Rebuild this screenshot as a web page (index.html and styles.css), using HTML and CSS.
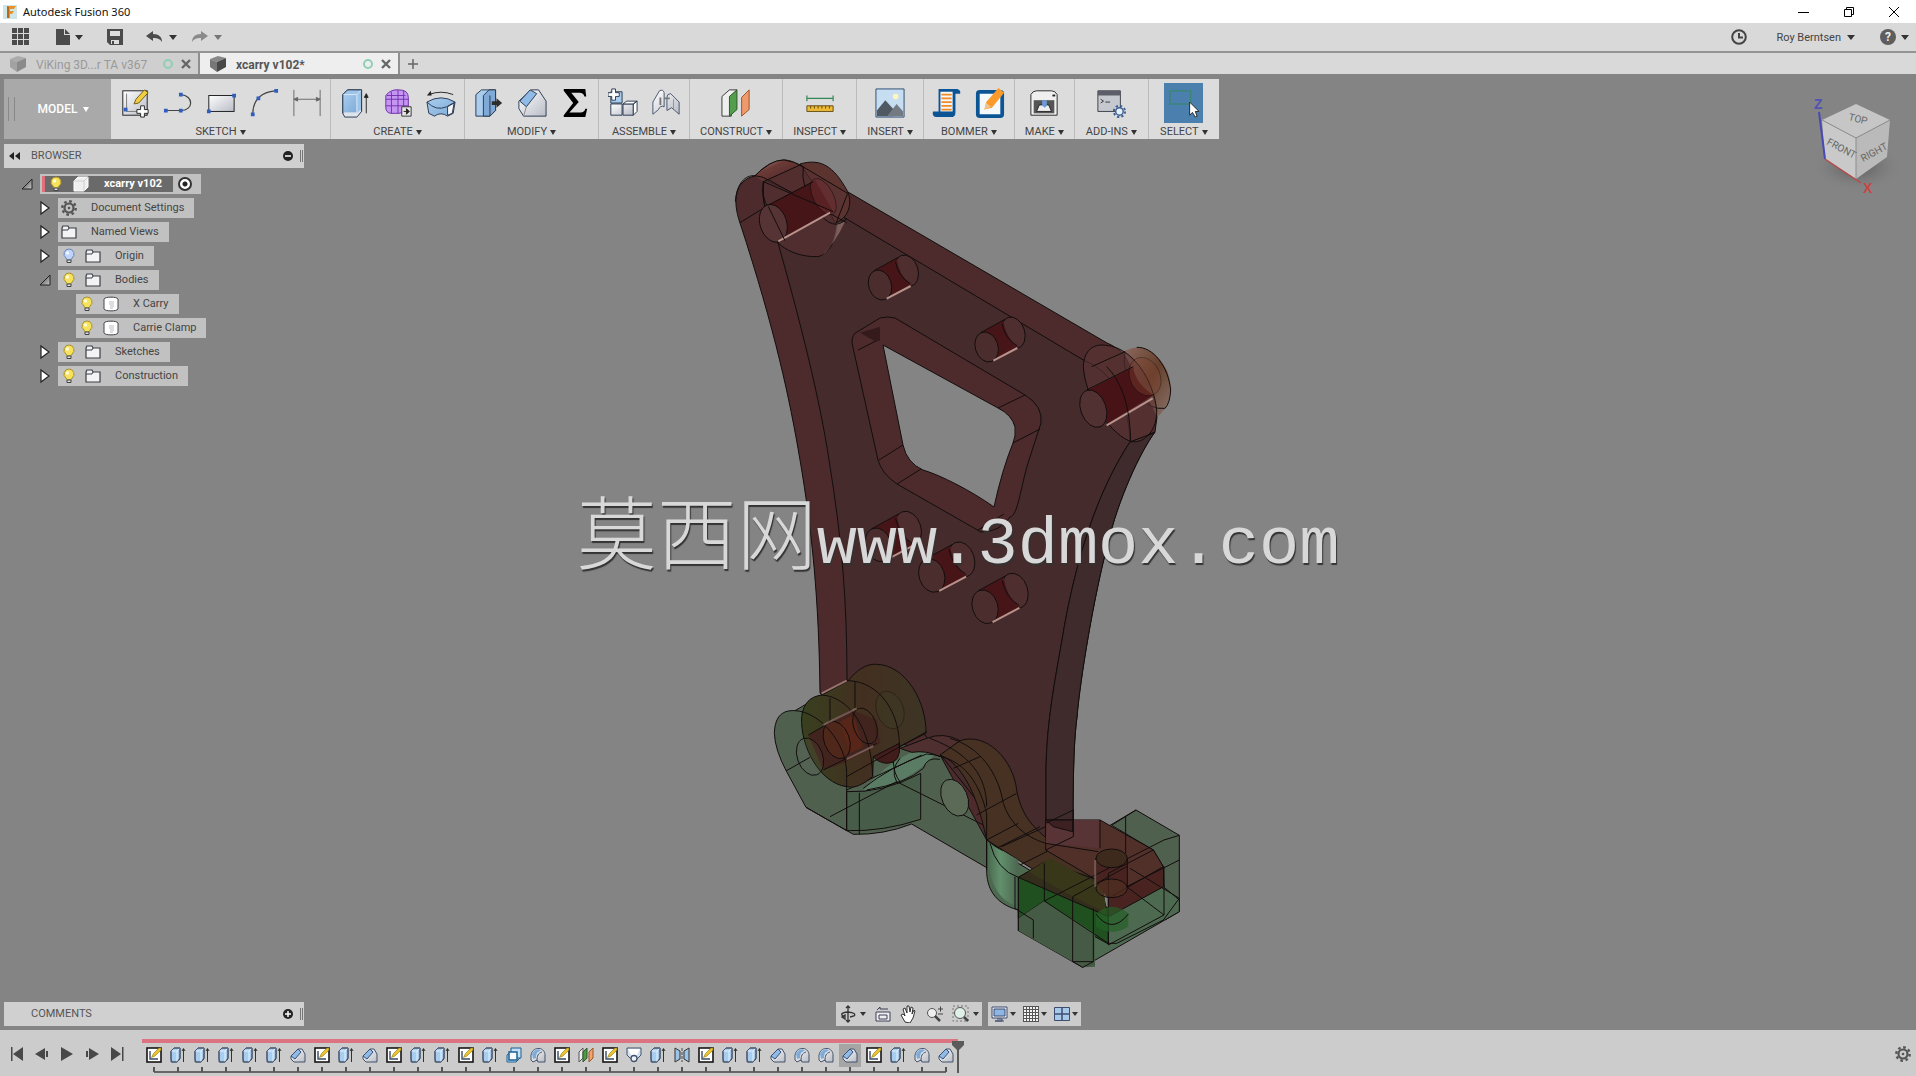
FILE: index.html
```html
<!DOCTYPE html>
<html lang="en">
<head>
<meta charset="utf-8">
<meta name="viewport" content="width=device-width, initial-scale=1">
<title>Autodesk Fusion 360</title>
<link rel="stylesheet" href="styles.css">
</head>
<body>
<svg class="sprite" aria-hidden="true">
  <defs>
    <linearGradient id="g-blue" x1="0" y1="0" x2="1" y2="1"><stop offset="0" stop-color="#a9cdee"/><stop offset="1" stop-color="#7fabd8"/></linearGradient>
    <linearGradient id="g-white" x1="0" y1="0" x2="1" y2="1"><stop offset="0" stop-color="#ffffff"/><stop offset="1" stop-color="#b9bcc6"/></linearGradient>
    <linearGradient id="g-tri" x1="0" y1="0" x2="1" y2="1"><stop offset="0.3" stop-color="#666"/><stop offset="1" stop-color="#ccc"/></linearGradient>
  </defs>
  <symbol id="t-sketch" viewBox="0 0 16 16"><rect x="1" y="1" width="14" height="14" fill="#fff" stroke="#151515" stroke-width="1.6"/><path d="M4 4v8h8" fill="none" stroke="#3c4a66" stroke-width="1.4"/><path d="M5.500 10.500l2-4L13 1h2v2L9 9z" fill="#ecc52c" stroke="#8b7415" stroke-width=".6"/></symbol>
  <symbol id="t-extrude" viewBox="0 0 16 16"><path d="M1 4l3-3h6v10l-3 4H1z" fill="#a9cdee" stroke="#43536b"/><path d="M1 4h6l3-3M7 4v11" fill="none" stroke="#e8f2fb"/><path d="M1 12l1 3h5l3-3V1H4L1 4z" fill="none" stroke="#43536b"/><path d="M13.500 15V2M12 4l1.500-2.500L15 4" fill="none" stroke="#333"/></symbol>
  <symbol id="t-chamfer" viewBox="0 0 16 16"><path d="M1 9l7-7h4l3 5v8H4l-3-3z" fill="url(#g-white)" stroke="#43536b"/><path d="M1 9l7-7 3 3-6 7z" fill="#8fbbe6" stroke="#36507a"/></symbol>
  <symbol id="t-fillet" viewBox="0 0 16 16"><path d="M1 8C2 3 6 1 9 1.500c4 0 6 4 6 6V15H8l-1-2-4 2-2-2z" fill="url(#g-white)" stroke="#43536b"/><path d="M2 7C4 2 9 1 11 4c-3 0-5 2-5 7l-3 1z" fill="#7fabd8"/><path d="M7 14c0-5 1-8 5-9" fill="none" stroke="#43536b"/></symbol>
  <symbol id="t-combine" viewBox="0 0 16 16"><path d="M5 5V1h10v10h-4M5 5l-4 3v7h9l4-4" fill="#bfe0f5" stroke="#1f5f8f"/><rect x="3" y="5" width="8" height="8" fill="#f4faff" stroke="#1f5f8f" stroke-width="1.500"/></symbol>
  <symbol id="t-plane" viewBox="0 0 16 16"><path d="M1 5l4-4v10l-4 4z" fill="#eee" stroke="#555"/><path d="M5 5l4-4v10l-4 4z" fill="#4c9a48" stroke="#2e5a2b"/><path d="M11 5l4-4v10l-4 4z" fill="#f3a46c" stroke="#9a5426"/></symbol>
  <symbol id="t-loft" viewBox="0 0 16 16"><path d="M1 1h14v7l-4 4H5L1 8z" fill="#cfe1f3" stroke="#43536b"/><path d="M2 2h12l-3 6H5z" fill="#fff"/><circle cx="8" cy="11.500" r="3" fill="#e8f2fb" stroke="#43536b" stroke-width="1.300"/></symbol>
  <symbol id="t-mirror" viewBox="0 0 16 16"><path d="M1 1l5 3v8l-5 3zM15 1l-5 3v8l5 3z" fill="#9cc3e8" stroke="#333"/><path d="M8 1v14" stroke="#444" stroke-dasharray="3 1"/></symbol>
  <symbol id="bulb" viewBox="0 0 16 16"><path d="M8 1a5 5 0 0 0-3 9l1 2h4l1-2a5 5 0 0 0-3-9z" fill="#f6e25c" stroke="#a8912c"/><circle cx="6.500" cy="5" r="1.700" fill="#fffbd6"/><path d="M6 12h4v2.500H6z" fill="#ddd" stroke="#444"/></symbol>
  <symbol id="bulb-off" viewBox="0 0 16 16"><path d="M8 1a5 5 0 0 0-3 9l1 2h4l1-2a5 5 0 0 0-3-9z" fill="#bed4fa" stroke="#6f86b4"/><circle cx="6.500" cy="5" r="1.700" fill="#eff5ff"/><path d="M6 12h4v2.500H6z" fill="#ddd" stroke="#444"/></symbol>
  <symbol id="folder" viewBox="0 0 16 16"><path d="M1 14V4l1-2h5l1 2h7v10z" fill="#f3f3f5" stroke="#3d3f45" stroke-width="1.200"/><path d="M1 6h6l1-2" fill="none" stroke="#3d3f45"/></symbol>
  <symbol id="body" viewBox="0 0 16 16"><path d="M1 3c1-2.500 13-2.500 14 0v10c-1 2.500-13 2.500-14 0z" fill="#fff" stroke="#44464c"/><path d="M6 6h5M6 8h5M7 10h4M7 12h3" stroke="#bbb"/></symbol>
  <symbol id="cube" viewBox="0 0 16 16"><path d="M1 5l4-4h10v10l-4 4H1z" fill="#efefef" stroke="#fff"/><path d="M1 5h10l4-4M11 5v10" fill="none" stroke="#cfcfcf"/></symbol>
  <symbol id="gear" viewBox="0 0 16 16"><circle cx="8" cy="8" r="4.500" fill="none" stroke="#555" stroke-width="2.200"/><circle cx="8" cy="8" r="6.700" fill="none" stroke="#555" stroke-width="2.400" stroke-dasharray="2.600 2.660"/><circle cx="8" cy="8" r="1.300" fill="#555"/></symbol>
  <symbol id="closed" viewBox="0 0 12 16"><path d="M2 2v12l8-6z" fill="#fff" stroke="#222" stroke-width="1.200"/></symbol>
  <symbol id="open" viewBox="0 0 12 12"><path d="M1 11h10V1z" fill="url(#g-tri)" stroke="#222"/></symbol>
  <symbol id="doc-cube" viewBox="0 0 16 16"><path d="M0 3l8-3 8 2-9 4z" fill="#888"/><path d="M0 3l7 3v10l-7-5z" fill="#777"/><path d="M7 6l9-4v9l-9 5z" fill="#484848"/></symbol>
  <symbol id="cross" viewBox="0 0 10 10"><path d="M1 1l8 8M9 1L1 9" stroke="#666" stroke-width="2.400"/></symbol>
</svg>

<div class="app">
  <header class="titlebar">
    <svg class="logo" viewBox="0 0 14 14"><rect width="14" height="14" fill="#cfe6e6"/><path d="M4 1h9l-2 3H7v2h4l-2 3H7v4H4z" fill="#e8922b"/><path d="M4 1l2 1v11H4z" fill="#b96a18"/></svg>
    <h1>Autodesk Fusion 360</h1>
    <div class="window-buttons">
      <button aria-label="Minimize"><svg viewBox="0 0 12 12"><path d="M0 6.500h11" stroke="#000"/></svg></button>
      <button aria-label="Restore"><svg viewBox="0 0 12 12"><path d="M1.500 3.500h7v7h-7zM3.500 3V1.500h7v7H9" fill="none" stroke="#000"/></svg></button>
      <button aria-label="Close"><svg viewBox="0 0 12 12"><path d="M1 1l10 10M11 1L1 11" stroke="#000"/></svg></button>
    </div>
  </header>

  <div class="quickbar">
    <button class="q-grid" aria-label="Data panel"><svg width="18" height="18" viewBox="0 0 18 18"><path d="M0 0h5v5H0zM6 0h5v5H6zM12 0h5v5h-5zM0 6h5v5H0zM6 6h5v5H6zM12 6h5v5h-5zM0 12h5v5H0zM6 12h5v5H6zM12 12h5v5h-5z" fill="#4b4b4b"/></svg></button>
    <button class="q-file" aria-label="File"><svg width="14" height="16" viewBox="0 0 14 16"><path d="M0 0h8v6h6v10H0z" fill="#4b4b4b"/><path d="M9 0l5 5H9z" fill="#4b4b4b"/></svg><i class="caret"></i></button>
    <button class="q-save" aria-label="Save"><svg width="16" height="16" viewBox="0 0 16 16"><path d="M0 0h16v16H3l-3-3z" fill="#4b4b4b"/><path d="M3 2h10v5H3zM4 11h8v4H4z" fill="#ddd"/><path d="M5 12h2v3H5z" fill="#4b4b4b"/></svg></button>
    <button class="q-undo" aria-label="Undo"><svg width="17" height="12" viewBox="0 0 17 12"><path d="M0 5l7-5v3c6 0 9 3 9 8-2-3-4-4-9-4v3z" fill="#4b4b4b"/></svg><i class="caret"></i></button>
    <button class="q-redo" aria-label="Redo"><svg width="17" height="12" viewBox="0 0 17 12"><path d="M17 5l-7-5v3C4 3 1 6 1 11c2-3 4-4 9-4v3z" fill="#8a8a8a"/></svg><i class="caret dim"></i></button>
    <span class="spacer"></span>
    <button class="q-job" aria-label="Job status"><svg width="16" height="16" viewBox="0 0 16 16"><circle cx="8" cy="8" r="6.800" fill="none" stroke="#444" stroke-width="2"/><path d="M8 4v4.500h4" fill="none" stroke="#444" stroke-width="2"/></svg></button>
    <button class="q-user">Roy Berntsen<i class="caret"></i></button>
    <button class="q-help" aria-label="Help"><span class="help">?</span><i class="caret"></i></button>
  </div>

  <nav class="tabs">
    <div class="tab"><svg class="dim-icon" width="16" height="16"><use href="#doc-cube"/></svg><a href="#viking">ViKing 3D...r TA v367</a><i class="status"></i><button aria-label="Close tab"><svg width="10" height="10"><use href="#cross"/></svg></button></div>
    <div class="tab active"><svg width="16" height="16"><use href="#doc-cube"/></svg><a href="#xcarry">xcarry v102*</a><i class="status"></i><button aria-label="Close tab"><svg width="10" height="10"><use href="#cross"/></svg></button></div>
    <button class="new-tab" aria-label="New tab"><svg width="12" height="12" viewBox="0 0 12 12"><path d="M6 1v10M1 6h10" stroke="#666" stroke-width="1.500"/></svg></button>
  </nav>

  <main class="viewport">
    <svg class="model" viewBox="0 74 1916 956" preserveAspectRatio="xMidYMid slice" role="img" aria-label="Carriage plate with clamp">
      <defs>
        <linearGradient id="lobe" x1="0" y1="0" x2="1" y2="1"><stop offset="0" stop-color="#caa79f"/><stop offset=".35" stop-color="#6b3a36"/><stop offset="1" stop-color="#4a2627"/></linearGradient>
        <linearGradient id="lobe2" x1="0" y1="0" x2="1" y2="1"><stop offset="0" stop-color="#8c6a60"/><stop offset=".5" stop-color="#653f2c"/><stop offset="1" stop-color="#8a7369"/></linearGradient>
        <linearGradient id="olive" x1="0" y1="0" x2="1" y2="0"><stop offset="0" stop-color="#38401f"/><stop offset=".5" stop-color="#432f20"/><stop offset="1" stop-color="#3d3525"/></linearGradient>
        <linearGradient id="bend" x1="0" y1="0" x2="1" y2="0"><stop offset="0" stop-color="#4a6b50"/><stop offset=".4" stop-color="#62906c"/><stop offset="1" stop-color="#4c6650"/></linearGradient>
      </defs>
      <g class="edge">
        <!-- plate side walls and front face -->
        <path fill="#4d2b2c" fill-rule="evenodd" d="M740 223C732 200 735 180 755 176C765 166 775 160 784 160C792 160 800 164 848 192L1107 343C1130 352 1155 390 1157 417L1155 432C1140 452 1118 500 1108 543C1094 595 1080 680 1077 717C1074 740 1073 770 1073 832L1046 850L1000 850L880 760L820 693C819 600 812 530 800 460C790 400 775 330 740 223zM883 345L998 408Q1012 415 1015 427Q1016 436 1013 443Q1002 470 994 507C970 490 940 475 923 470Q907 463 903 445z"/>
        <path fill="#452b2c" fill-rule="evenodd" d="M778 243C800 320 820 400 829 460C842 540 847 600 847 680L925 735L1000 830L1046 850L1046 767C1047 720 1055 680 1062 640C1075 560 1098 490 1130 442C1129 400 1110 370 1085 361L840 215L765 180C760 190 764 215 778 243zM852 343Q852 334 857 332L880 318Q888 316 895 318L1025 395Q1043 406 1041 423L1028 463C1020 490 1018 515 1010 517Q1000 532 981 532L897 484Q882 474 878 460L852 343z"/>
        <path fill="none" d="M858 350L878 340M998 408L1025 395M1013 443L1040 429M879 460L903 445M897 484L921 469M978 530L1004 514"/>
        <path fill="#3f2b2b" d="M1130 442L1155 432C1140 452 1118 500 1108 543C1094 595 1080 680 1077 717C1074 740 1073 770 1073 832L1046 850V767C1047 720 1055 680 1062 640C1075 560 1098 490 1130 442z"/>
      </g>

      <!-- bosses and screw holes of the upper half -->
      <g class="edge" transform="translate(720 150) scale(.33333)">
        <path fill="url(#lobe)" d="M105 77C140 50 160 30 192 30C220 32 235 42 240 45L130 95z" stroke="none"/>
        <path fill="#5b332f" d="M240 42C300 25 340 45 383 125C400 165 380 210 345 218L300 130z"/>
        <path fill="#5a3233" fill-opacity=".55" d="M130 95L240 45L383 130L350 215C355 270 320 320 290 320C250 320 210 310 175 280C140 210 125 150 130 95z"/>
        <path fill="#a1807a" stroke="none" d="M350 220L375 215Q345 280 305 318Q345 290 350 220z" opacity=".6"/>
        <path fill="none" d="M46 155C50 100 75 75 105 77Q125 78 150 92L380 218M60 218L135 172M135 165L175 280M105 77Q150 30 192 30Q220 33 250 50M250 50Q240 110 290 180T380 205M130 95Q125 150 145 170"/>
        <path fill="#451518" stroke="none" d="M145 165L285 90L340 185L205 258z"/>
        <ellipse cx="310" cy="140" rx="30" ry="60" transform="rotate(-28 310 140)" fill="#6b2c2f" opacity=".55"/>
        <ellipse cx="160" cy="220" rx="40" ry="58" transform="rotate(-18 160 220)" fill="#563334"/>
        <path class="glint" d="M175 274L330 188"/>
        <path fill="none" d="M145 165L280 95M130 95L340 185M145 170L195 272"/>

        <g id="hole">
          <ellipse cx="560" cy="362" rx="34" ry="48" transform="rotate(-18 560 362)" fill="#4f2e30"/>
          <path fill="#471518" stroke="none" d="M465 362L530 325Q535 375 575 408L512 442Q510 380 465 362z"/>
          <ellipse cx="480" cy="405" rx="34" ry="46" transform="rotate(-18 480 405)" fill="#4b2d2e"/>
          <path class="glint" d="M500 446L572 408"/><path fill="none" d="M462 362L535 322M526 335Q535 380 572 402"/>
        </g>
        <use href="#hole" x="320" y="186"/>
        <path d="M420 548L480 530V572L462 572z" fill="#351a1c" stroke="none"/>

        <path fill="url(#lobe2)" stroke="none" d="M1210 605C1260 580 1300 590 1340 660C1365 720 1350 770 1312 800z"/>
        <path fill="none" d="M1250 592C1300 590 1345 650 1352 720Q1350 760 1335 775Q1290 780 1260 740Q1200 670 1215 605"/>
        <path fill="#5c3536" fill-opacity=".55" d="M1090 650C1092 600 1120 580 1160 586C1240 595 1300 690 1310 780C1312 840 1275 880 1235 875C1180 860 1095 750 1090 650z"/>
        <path fill="#481316" stroke="none" d="M1105 720L1240 652Q1245 700 1300 735L1165 820z"/>
        <ellipse cx="1275" cy="680" rx="45" ry="60" transform="rotate(-25 1275 680)" fill="#7c4230" opacity=".4"/>
        <ellipse cx="1120" cy="776" rx="38" ry="58" transform="rotate(-20 1120 776)" fill="#523132"/>
        <path class="glint" d="M1160 826L1298 745"/>
        <path fill="none" d="M1100 720L1240 650M1115 650L1215 605M1160 650Q1230 720 1232 875L1300 850"/>
        <use href="#hole" transform="translate(520 1162) scale(1.12) translate(-520 -385)"/>
        <use href="#hole" transform="translate(680 1254) scale(1.12) translate(-520 -385)"/>
        <use href="#hole" transform="translate(840 1348) scale(1.12) translate(-520 -385)"/>
      </g>

      <!-- clamp and lower bosses -->
      <g class="edge" transform="translate(740 640) scale(.33333)">
        <path fill="#50604f" d="M103 280C105 225 130 210 165 212L245 165L400 330L480 310L600 345L740 600V683L515 552Q430 585 340 583L198 502L140 395Q105 330 103 280z"/>
        <path fill="#485d49" d="M320 455Q430 460 542 400V538Q430 575 320 572z"/>
        <path fill="#5f856b" fill-opacity=".75" stroke="none" d="M370 450Q440 370 515 337H590Q540 400 460 430Q420 450 370 450z"/>
        <path fill="none" d="M320 450L545 345M370 445Q450 380 560 342M380 450Q500 430 550 385Q560 350 600 358M270 530L470 425Q450 390 480 355M358 458V583M470 425L740 560M460 360Q460 400 480 425"/>
        <path fill="url(#olive)" d="M185 230C190 190 210 170 245 165L325 122C350 90 380 70 410 73C500 75 560 190 558 280L478 320Q470 375 400 350L398 410Q350 450 320 440C240 430 180 320 185 230z"/>
        <path fill="#42241e" stroke="none" d="M205 285L335 210L410 240L420 310L310 370L250 390z"/>
        <path fill="#421c1b" d="M400 350L478 310Q485 370 440 370Q415 368 400 350z"/>
        <path fill="#582519" stroke="none" d="M300 245L340 225L370 320L330 340z"/>
        <ellipse cx="375" cy="258" rx="34" ry="56" transform="rotate(-20 375 258)" fill="none"/>
        <ellipse cx="290" cy="300" rx="38" ry="58" transform="rotate(-20 290 300)" fill="#5b2a18" fill-opacity=".5"/>
        <ellipse cx="210" cy="350" rx="38" ry="58" transform="rotate(-20 210 350)" fill="#777" fill-opacity=".1"/>
        <ellipse cx="450" cy="210" rx="40" ry="58" transform="rotate(-20 450 210)" fill="#3c3a22" fill-opacity=".5" stroke-opacity=".4"/>
        <path fill="none" d="M165 212C240 215 320 310 320 400V572M245 165C330 170 395 270 398 410M325 122C420 125 480 220 478 320M205 285L335 210M250 390L410 310M320 410L560 275M138 393L210 352M345 125V205M270 175V250M198 502L320 572"/>
        <path class="glint" d="M245 160L320 122" opacity=".7"/><path class="glint" d="M250 255L350 205M320 357L400 318" opacity=".5"/>
        <path fill="#4f2f2f" d="M480 325L560 295Q610 275 660 302L600 350Q560 330 515 337z"/>
        <path fill="#463123" d="M600 345L660 302C740 275 820 360 830 450C845 530 880 560 920 595L1075 710L1105 830L740 600C725 530 690 380 600 345z"/>
        <path fill="none" d="M560 342C680 350 720 440 740 520V600L835 550M630 295C720 320 775 400 790 490Q820 580 917 610M570 295C690 340 740 410 740 500M710 525L830 460M640 385L720 350M760 630L900 560M785 620L917 560M830 680L970 610"/>
        <ellipse cx="644" cy="473" rx="38" ry="58" transform="rotate(-24 644 473)" fill="#5a6a56"/>
        <path fill="#50604f" d="M1115 556L1188 510L1318 586V815L1275 840L1270 680L1240 630z"/>
        <path fill="#4d6950" d="M740 600L835 670L1000 770L1105 830L1270 740L1318 780V815L1028 982L835 872V810C760 790 740 740 740 690z"/>
        <path fill="url(#bend)" stroke="none" d="M745 610L835 660V800C770 780 740 720 745 610z"/>
        <path fill="#205020" d="M835 712L913 670L1105 805V912L1065 890L913 783L835 835z"/>
        <path fill="#465b45" stroke="none" d="M835 835L913 783L1065 880V980L1028 982L835 872z"/>
        <path fill="#332d1b" d="M835 712L915 665L1075 720L1105 830z"/>
        <path fill="#38371a" stroke="none" d="M865 695L930 655L1090 740L1100 820L1000 770z"/>
        <path fill="#52302a" d="M917 540H1080L1240 630L1270 680V740L1105 830V775L1070 720L917 630z"/>
        <path fill="#583436" stroke="none" d="M920 540H1078V625L917 610z"/>
        <path fill="#3d2022" d="M917 540H998V575L940 560z"/>
        <path fill="#482320" stroke="none" d="M1065 655L1162 655V740L1268 685V738L1108 828V775L1065 720z"/>
        <path fill="none" d="M917 630L1000 590L1000 510L917 550M917 610L1075 635M1080 540V625M1240 630L1105 700V775M1270 680L1105 775M998 770V965L1028 982L1060 965V805M1105 775V915L1272 825V680M998 770L1160 680M835 712V872M913 670V783L1272 600L1318 586M913 783L1105 910M740 690V600M825 710V805L880 840V895M998 965H1060M1318 660L1160 740L1272 825M1157 530V640M1188 510L1110 556M1318 775L1270 840L1130 910H1105M750 610Q770 690 835 712M1170 685L1318 775"/>
        <ellipse cx="1115" cy="655" rx="47" ry="28" fill="#3d2a1d"/>
        <ellipse cx="1115" cy="745" rx="47" ry="28" fill="#533022" fill-opacity=".6"/>
        <path fill="#256027" fill-opacity=".7" stroke="none" d="M1068 822Q1115 780 1165 820V860Q1115 890 1068 860z"/>
        <path fill="none" d="M1068 822Q1115 885 1165 822M1068 655V740M1162 655V740"/>
        <path class="glint" d="M1066 660V740" opacity=".5"/>
      </g>
    </svg>

    <p class="watermark"><span lang="zh">莫西网</span>www.3dmox.com</p>

    <svg class="viewcube" width="112" height="112" viewBox="0 0 112 112" role="img" aria-label="View cube">
      <defs><radialGradient id="cs"><stop offset="0" stop-color="#555"/><stop offset="1" stop-color="#848484" stop-opacity="0"/></radialGradient></defs>
      <ellipse cx="58" cy="78" rx="46" ry="26" fill="url(#cs)"/>
      <path d="M57 16L91 32L57 50L23 32z" fill="#c6c6c6"/><path d="M23 32L57 50L57 91L26 71z" fill="#c9c9c9"/><path d="M57 50L91 32L88 69L57 91z" fill="#bababa"/>
      <path d="M23 32L57 50L91 32M57 50V91" fill="none" stroke="#8c8c8c"/>
      <path d="M20 24L26 71" stroke="#4949b5" stroke-width="2"/><path d="M26 71L62 95" stroke="#b84a4a" stroke-width="1.500"/>
      <text x="15" y="21" class="axis-z">Z</text><text x="64" y="105" class="axis-x">X</text>
      <text transform="translate(49 32) rotate(14)">TOP</text><text transform="translate(27 56) rotate(28)">FRONT</text><text transform="translate(64 74) rotate(-28)">RIGHT</text>
    </svg>

    <div class="ribbon">
      <button class="workspace">MODEL<i class="caret"></i></button>
      <section class="group">
        <div class="tools">
          <button aria-label="Create sketch"><svg viewBox="0 0 32 32"><rect x="3" y="3" width="26" height="26" fill="url(#g-white)" stroke="#1a1a1a"/><path d="M7 6v19h18" fill="none" stroke="#777"/><path d="M4 21h4v4H4z" fill="#2e5fc0"/><path d="M15 17l2-5L26 2l4 3-10 11z" fill="#f1cd42" stroke="#6b5a1a"/><path d="M22 19h4v4h4v4h-4v4h-4v-4h-4v-4h4z" fill="#fff" stroke="#222"/></svg></button>
          <button aria-label="Line"><svg viewBox="0 0 32 32"><path d="M3 24h16c14 0 14-16 0-17" fill="none" stroke="#444" stroke-width="1.300"/><path d="M1 22h4v4H1zM17 22h4v4h-4zM17 5h4v4h-4z" fill="#2e5fc0"/></svg></button>
          <button aria-label="Rectangle"><svg viewBox="0 0 32 32"><rect x="3" y="8" width="27" height="17" fill="url(#g-white)" stroke="#1a1a1a"/><path d="M1 23h4v4H1zM28 6h4v4h-4z" fill="#2e5fc0"/></svg></button>
          <button aria-label="Arc"><svg viewBox="0 0 32 32"><path d="M4 28C4 12 14 4 28 3" fill="none" stroke="#444" stroke-width="1.300"/><path d="M2 26h4v4H2zM8 9h4v4H8zM27 1h4v4h-4z" fill="#2e5fc0"/></svg></button>
          <button aria-label="Dimension"><svg viewBox="0 0 32 32"><path d="M2 2v28M30 2v28M2 12h28M2 12l4-2v4zM30 12l-4-2v4z" fill="#666" stroke="#666"/></svg></button>
        </div>
        <button class="menu">SKETCH<i class="caret"></i></button>
      </section>
      <section class="group">
        <div class="tools">
          <button aria-label="Extrude"><svg viewBox="0 0 32 32"><path d="M3 7l5-5h15v23l-5 6H5l-2-4z" fill="#dfe3ea" stroke="#27384f"/><path d="M3 7h15v19H3z" fill="url(#g-blue)"/><path d="M3 7l5-5h15v20l-5 5V7z" fill="#9dc5ea"/><path d="M18 7v23M18 7l5-5M3 7h15" fill="none" stroke="#d8eafa"/><path d="M3 27V7l5-5h15v23" fill="none" stroke="#27384f"/><path d="M28 27V8M26 10l2-4 2 4z" stroke="#222" fill="#222"/></svg></button>
          <button aria-label="Create form"><svg viewBox="0 0 32 32"><path d="M3 8q5-7 14-6 10 0 10 8v10q-2 6-10 7H8q-5-1-5-6z" fill="#c595f2" stroke="#6b2aa5"/><path d="M9 4v23M16 2v25M22 3v22M3 12h24M3 19h24M4 8h20" fill="none" stroke="#7330ad"/><path d="M20 20h10v10H20z" fill="#e6e6e6" stroke="#333"/><path d="M22 25h4M25 22l3 3-3 3z" stroke="#222" fill="#222"/></svg></button>
          <button aria-label="Revolve"><svg viewBox="0 0 32 32"><path d="M1 15q15-9 30 0l-2 12-6 3q-7-5-14 0l-6-3z" fill="url(#g-blue)" stroke="#27384f"/><path d="M1 15q10 10 21 5l9-5" fill="none" stroke="#27384f"/><path d="M23 20l7-4-2 11-5 2z" fill="#f4f4f4" stroke="#27384f"/><path d="M3 7q13-5 26 0" fill="none" stroke="#222"/><path d="M1 8l4-5 1 5z" fill="#222"/></svg></button>
        </div>
        <button class="menu">CREATE<i class="caret"></i></button>
      </section>
      <section class="group">
        <div class="tools">
          <button aria-label="Press pull"><svg viewBox="0 0 32 32"><path d="M2 7l6-5h15v22l-6 6H2z" fill="#aacdee" stroke="#27384f"/><path d="M10 8l6-6h7v22l-6 6h-7z" fill="#7fa9d6" stroke="#27384f"/><path d="M17 8v22" stroke="#27384f"/><path d="M19 14h5v-3l6 5-6 5v-3h-5z" fill="#2d2d2d"/></svg></button>
          <button aria-label="Fillet"><svg viewBox="0 0 32 32"><path d="M2 14L15 2h8l8 12v16H7l-5-8z" fill="url(#g-white)" stroke="#27384f"/><path d="M3 14L14 2l7 4L10 20z" fill="#8fbbe6" stroke="#27384f"/><path d="M10 20l-3 10" stroke="#888"/></svg></button>
          <button aria-label="Parameters"><svg viewBox="0 0 32 32"><path d="M4 1h23l1 8h-2q-1-4-5-4H12l8 10-10 11h12q4 0 5-4h2l-2 9H4v-2l10-13L4 3z" fill="#000"/></svg></button>
        </div>
        <button class="menu">MODIFY<i class="caret"></i></button>
      </section>
      <section class="group">
        <div class="tools">
          <button aria-label="New component"><svg viewBox="0 0 32 32"><path d="M3 4h12v12H3z" fill="#a9cdee" stroke="#27384f"/><path d="M3 17h12v12H3zM16 17h11v12H16z" fill="url(#g-white)" stroke="#27384f"/><path d="M16 17l4-3h11l-4 3zM27 17l4-3v11l-4 4z" fill="#fff" stroke="#27384f"/><path d="M4 1h4v4h4v4H8v4H4V9H0V5h4z" fill="#fff" stroke="#27384f"/></svg></button>
          <button aria-label="Joint"><svg viewBox="0 0 32 32"><path d="M2 28V15L9 3q4-2 5 2v15q-4-2-6 3zM30 28V15l-9-9q-4 0-4 4v14l5-3z" fill="url(#g-white)" stroke="#43536b"/><path d="M14 11h6M10 10v8" stroke="#777" stroke-width="2"/><path d="M24 12v10" stroke="#dc7650"/></svg></button>
        </div>
        <button class="menu">ASSEMBLE<i class="caret"></i></button>
      </section>
      <section class="group">
        <div class="tools"><button aria-label="Offset plane"><svg viewBox="0 0 32 32"><path d="M1 9l8-7h8l-6 7v21H1z" fill="#eee" stroke="#333"/><path d="M9 9l8-7v21l-8 7z" fill="#539e4d" stroke="#27502a"/><path d="M22 10l8-8v21l-8 7z" fill="#ef9a6c" stroke="#a04e20"/></svg></button></div>
        <button class="menu">CONSTRUCT<i class="caret"></i></button>
      </section>
      <section class="group">
        <div class="tools"><button aria-label="Measure"><svg viewBox="0 0 32 32"><path d="M2 8v6M30 8v6M2 11h28" stroke="#385" stroke-width="1.300"/><path d="M2 19h28v6H2z" fill="#eebc36" stroke="#614a10"/><path d="M6 19v3M10 19v3M14 19v3M18 19v3M22 19v3M26 19v3" stroke="#614a10"/></svg></button></div>
        <button class="menu">INSPECT<i class="caret"></i></button>
      </section>
      <section class="group narrow">
        <div class="tools"><button aria-label="Insert image"><svg viewBox="0 0 32 32"><path d="M1 1h30v30H1z" fill="#c7def2" stroke="#29496d"/><circle cx="22" cy="9" r="3" fill="#fff6bb"/><path d="M2 24L11 13l9 10v7H2z" fill="#505962"/><path d="M13 30l10-13 7 8v5z" fill="#737a82"/></svg></button></div>
        <button class="menu">INSERT<i class="caret"></i></button>
      </section>
      <section class="group">
        <div class="tools">
          <button aria-label="Bill of materials"><svg viewBox="0 0 32 32"><path d="M7 1h20q4 1 3 5h-5v20q0 5-5 5H4q-4-1-3-6h6z" fill="#0c5594"/><path d="M9 4h13v21H9z" fill="#f6f6f6"/><path d="M10 7h11M10 11h11M10 15h11M10 19h11M10 23h11" stroke="#f18a22" stroke-width="2"/></svg></button>
          <button aria-label="Edit properties"><svg viewBox="0 0 32 32"><rect x="3" y="4" width="26" height="26" rx="2" fill="#f4f8fb" stroke="#0c5594" stroke-width="4"/><path d="M10 23l2-8L25 0l6 5-13 16z" fill="#fa9a2b"/><path d="M10 23l2-7 5 4z" fill="#f0c48c"/></svg></button>
        </div>
        <button class="menu">BOMMER<i class="caret"></i></button>
      </section>
      <section class="group narrow">
        <div class="tools"><button aria-label="3D print"><svg viewBox="0 0 32 32"><path d="M2 7q2-4 6-4h16q4 0 6 4v22H2z" fill="#efefef" stroke="#222"/><path d="M5 13h22v14H5z" fill="#555"/><path d="M8 25l3-7h10l3 7z" fill="#eee" stroke="#222"/><path d="M14 13h5v6l-2 2-3-2z" fill="#6c9cd6"/><path d="M25 8h3" stroke="#222" stroke-width="2"/></svg></button></div>
        <button class="menu">MAKE<i class="caret"></i></button>
      </section>
      <section class="group">
        <div class="tools"><button aria-label="Scripts and add-ins"><svg viewBox="0 0 32 32"><path d="M2 3h24v22H2z" fill="#c6c8cf" stroke="#3b3d45"/><path d="M2 3h24v5H2z" fill="#5c5f6a"/><path d="M5 12l3 2-3 2M10 15h5" fill="none" stroke="#333"/><circle cx="25" cy="25" r="4" fill="#e6eef8" stroke="#3b5d8f" stroke-width="1.500"/><circle cx="25" cy="25" r="6" fill="none" stroke="#3b5d8f" stroke-width="2" stroke-dasharray="2.400 2.300"/></svg></button></div>
        <button class="menu">ADD-INS<i class="caret"></i></button>
      </section>
      <section class="group">
        <div class="tools"><button class="on" aria-label="Select"><svg viewBox="0 0 32 32"><path d="M1 3h22v14H1z" fill="none" stroke="#3d8577" stroke-width="1.500"/><path d="M22 15v14l3-3 3 5 2-1-2-5h4z" fill="#fff" stroke="#222"/></svg></button></div>
        <button class="menu">SELECT<i class="caret"></i></button>
      </section>
    </div>

    <aside class="browser">
      <div class="panel-head"><svg width="11" height="8" viewBox="0 0 11 8"><path d="M5 0v8L0 4zM11 0v8L6 4z" fill="#222"/></svg><h2>BROWSER</h2><button aria-label="Collapse"><svg width="10" height="10" viewBox="0 0 10 10"><circle cx="5" cy="5" r="5" fill="#222"/><path d="M2 5h6" stroke="#fff" stroke-width="1.500"/></svg></button><i class="grip"></i></div>
      <ul class="tree">
        <li class="root"><svg class="twist" width="12" height="12"><use href="#open"/></svg><span class="chip root-chip"><span class="root-name"><svg><use href="#bulb"/></svg><svg><use href="#cube"/></svg><b>xcarry v102</b></span><input type="radio" name="active" aria-label="Activate xcarry v102" checked></span></li>
        <li><svg class="twist" width="12" height="16"><use href="#closed"/></svg><span class="chip"><svg><use href="#gear"/></svg><b>Document Settings</b></span></li>
        <li><svg class="twist" width="12" height="16"><use href="#closed"/></svg><span class="chip"><svg><use href="#folder"/></svg><b>Named Views</b></span></li>
        <li><svg class="twist" width="12" height="16"><use href="#closed"/></svg><span class="chip"><svg><use href="#bulb-off"/></svg><svg><use href="#folder"/></svg><b>Origin</b></span></li>
        <li><svg class="twist" width="12" height="12"><use href="#open"/></svg><span class="chip"><svg><use href="#bulb"/></svg><svg><use href="#folder"/></svg><b>Bodies</b></span></li>
        <li class="leaf"><span class="chip"><svg><use href="#bulb"/></svg><svg><use href="#body"/></svg><b>X Carry</b></span></li>
        <li class="leaf"><span class="chip"><svg><use href="#bulb"/></svg><svg><use href="#body"/></svg><b>Carrie Clamp</b></span></li>
        <li><svg class="twist" width="12" height="16"><use href="#closed"/></svg><span class="chip"><svg><use href="#bulb"/></svg><svg><use href="#folder"/></svg><b>Sketches</b></span></li>
        <li><svg class="twist" width="12" height="16"><use href="#closed"/></svg><span class="chip"><svg><use href="#bulb"/></svg><svg><use href="#folder"/></svg><b>Construction</b></span></li>
      </ul>
    </aside>

    <div class="bottom">
      <div class="panel-head comments"><h2>COMMENTS</h2><button aria-label="Expand"><svg width="10" height="10" viewBox="0 0 10 10"><circle cx="5" cy="5" r="5" fill="#222"/><path d="M2 5h6M5 2v6" stroke="#fff" stroke-width="1.500"/></svg></button><i class="grip"></i></div>
      <div class="navbars">
        <div class="navbar">
          <button aria-label="Orbit"><svg viewBox="0 0 18 18"><path d="M9 1v16M7 3l2-2 2 2M7 15l2 2 2-2" fill="none" stroke="#333" stroke-width="1.300"/><path d="M5 12Q-1 8 9 7q9 1 6 4l-4 1M6 10v4l-3-2z" fill="none" stroke="#333" stroke-width="1.300"/></svg><i class="caret"></i></button>
          <button aria-label="Look at"><svg viewBox="0 0 18 18"><path d="M2 7h14v9H2zM5 10h8v4H5z" fill="#eee" stroke="#3d3f55"/><path d="M3 5l3-3v2h8" fill="none" stroke="#3d3f55"/></svg></button>
          <button aria-label="Pan"><svg viewBox="0 0 18 18"><path d="M5 17L1 10l2-1 2 2-2-7 2-1 2 5V1h2l1 6 1-5 2 1-1 6 2-4 1 1-2 7-3 5z" fill="#fff" stroke="#333"/></svg></button>
          <button aria-label="Zoom"><svg viewBox="0 0 18 18"><circle cx="6" cy="8" r="4.500" fill="#eee" stroke="#555"/><path d="M9 11l5 5" stroke="#444" stroke-width="2.500"/><path d="M12 4h5M14.500 1.500v5M12 9h5" stroke="#444"/></svg></button>
          <button aria-label="Fit"><svg viewBox="0 0 18 18"><path d="M1 1h15v15H1z" fill="none" stroke="#777" stroke-dasharray="2 2"/><circle cx="8" cy="8" r="5.500" fill="#dff0e6" stroke="#555"/><path d="M12 12l4 4" stroke="#444" stroke-width="2.500"/></svg><i class="caret"></i></button>
        </div>
        <div class="navbar tight">
          <button aria-label="Display settings"><svg viewBox="0 0 18 18"><path d="M1 2h15v11H1z" fill="#eee" stroke="#3d4d70"/><path d="M3 4h11v7H3z" fill="#8db6e2" stroke="#3d4d70"/><path d="M6 14h5v2H4h9" stroke="#3d4d70" fill="none"/></svg><i class="caret"></i></button>
          <button aria-label="Grid and snaps"><svg viewBox="0 0 18 18"><path d="M1.500 1.500h15v15h-15z" fill="#f4f4f4"/><path d="M1.500 1v16M4.500 1v16M7.500 1v16M10.500 1v16M13.500 1v16M16.500 1v16M1 1.500h16M1 4.500h16M1 7.500h16M1 10.500h16M1 13.500h16M1 16.500h16" stroke="#555"/></svg><i class="caret"></i></button>
          <button aria-label="Viewports"><svg viewBox="0 0 18 18"><path d="M1.500 2.500h15v13h-15z" fill="#a8c8ea" stroke="#3d4d70"/><path d="M9 2v14M1 9h16" stroke="#3d4d70" stroke-width="1.500"/></svg><i class="caret"></i></button>
        </div>
      </div>
    </div>
  </main>

  <footer class="timeline">
    <div class="playback">
      <button aria-label="Go to start"><svg viewBox="0 0 14 14"><path d="M1 0h1.500v14H1zM13 0v14L3 7z"/></svg></button>
      <button aria-label="Step back"><svg viewBox="0 0 14 14"><path d="M10 1v12L0 7zM11 4h2v6h-2z"/></svg></button>
      <button aria-label="Play"><svg viewBox="0 0 14 14"><path d="M1 0v14l12-7z"/></svg></button>
      <button aria-label="Step forward"><svg viewBox="0 0 14 14"><path d="M4 1v12l10-6zM1 4h2v6H1z"/></svg></button>
      <button aria-label="Go to end"><svg viewBox="0 0 14 14"><path d="M1 0v14l10-7zM12 0h1.500v14H12z"/></svg></button>
    </div>
    <ol class="features">
      <li><svg><use href="#t-sketch"/></svg></li><li><svg><use href="#t-extrude"/></svg></li><li><svg><use href="#t-extrude"/></svg></li><li><svg><use href="#t-extrude"/></svg></li><li><svg><use href="#t-extrude"/></svg></li><li><svg><use href="#t-extrude"/></svg></li><li><svg><use href="#t-chamfer"/></svg></li><li><svg><use href="#t-sketch"/></svg></li><li><svg><use href="#t-extrude"/></svg></li><li><svg><use href="#t-chamfer"/></svg></li><li><svg><use href="#t-sketch"/></svg></li><li><svg><use href="#t-extrude"/></svg></li><li><svg><use href="#t-extrude"/></svg></li><li><svg><use href="#t-sketch"/></svg></li><li><svg><use href="#t-extrude"/></svg></li><li><svg><use href="#t-combine"/></svg></li><li><svg><use href="#t-fillet"/></svg></li><li><svg><use href="#t-sketch"/></svg></li><li><svg><use href="#t-plane"/></svg></li><li><svg><use href="#t-sketch"/></svg></li><li><svg><use href="#t-loft"/></svg></li><li><svg><use href="#t-extrude"/></svg></li><li><svg><use href="#t-mirror"/></svg></li><li><svg><use href="#t-sketch"/></svg></li><li><svg><use href="#t-extrude"/></svg></li><li><svg><use href="#t-extrude"/></svg></li><li><svg><use href="#t-chamfer"/></svg></li><li><svg><use href="#t-fillet"/></svg></li><li><svg><use href="#t-fillet"/></svg></li><li class="picked"><svg><use href="#t-chamfer"/></svg></li><li><svg><use href="#t-sketch"/></svg></li><li><svg><use href="#t-extrude"/></svg></li><li><svg><use href="#t-fillet"/></svg></li><li><svg><use href="#t-chamfer"/></svg></li>
    </ol>
    <svg class="marker" width="12" height="32" viewBox="0 0 12 32"><path d="M0 0h12v4L7 9v23H5V9L0 4z" fill="#5a5a5a"/></svg>
    <span class="spacer"></span>
    <button class="settings" aria-label="Timeline settings"><svg width="16" height="16"><use href="#gear"/></svg></button>
  </footer>
</div>
</body>
</html>
```
FILE: styles.css
```css
* { box-sizing: border-box; }

body {
  margin: 0;
  font-family: Roboto, "Liberation Sans", sans-serif;
  font-size: 12px;
  color: #444;
}

button {
  display: flex;
  align-items: center;
  justify-content: center;
  margin: 0;
  padding: 0;
  border: 0;
  background: none;
  color: inherit;
  font: inherit;
}

h1, h2, ul, ol, p { margin: 0; padding: 0; font-weight: 400; list-style: none; }
svg { display: block; flex: none; }
.sprite { position: absolute; width: 0; height: 0; }
.spacer { flex: 1; }

.app { display: flex; flex-direction: column; min-height: 100vh; }

.caret {
  flex: none;
  border: 3px solid transparent;
  border-top: 5px solid #333;
  border-bottom: 0;
}
.caret.dim { border-top-color: #777; }

/* Title bar */
.titlebar { display: flex; align-items: center; height: 23px; padding-left: 3px; background: #fff; }
.logo { width: 14px; height: 14px; }
.titlebar h1 { flex: 1; margin-left: 6px; font: 11px/20px "Noto Sans", sans-serif; color: #111; }
.window-buttons { display: flex; }
.window-buttons button { width: 45px; height: 20px; }
.window-buttons svg { width: 12px; height: 12px; }

/* Quick access bar */
.quickbar { display: flex; align-items: center; height: 30px; background: #d9d9d9; border-bottom: 2px solid #949494; }
.quickbar .caret { border-width: 5px 4px 0; margin-left: 6px; }
.q-grid { margin-left: 12px; }
.q-file { margin-left: 26px; }
.q-file .caret { margin-left: 5px; }
.q-save { margin-left: 24px; }
.q-undo { margin-left: 23px; }
.q-redo { margin-left: 14px; }
.q-user { margin-left: 29px; font-size: 11px; }
.q-help { margin: 0 7px 0 25px; }
.help { width: 16px; height: 16px; border-radius: 8px; background: #5e5e5e; color: #eee; font-weight: 700; line-height: 16px; }
.quickbar .help + .caret { margin-left: 5px; }

/* Document tabs */
.tabs { display: flex; height: 21px; background: #d9d9d9; }
.tab { display: flex; align-items: center; width: 200px; padding: 0 7px 0 10px; background: #cfcfcf; border-right: 2px solid #8f8f8f; }
.tab a { flex: 1; margin-left: 10px; padding-top: 3px; color: #999; font-size: 12px; line-height: 18px; text-decoration: none; white-space: nowrap; }
.tab.active { background: #eee; }
.tab.active a { color: #555; font-weight: 700; }
.dim-icon { opacity: .5; }
.status { width: 10px; height: 10px; margin-right: 8px; border: 2px solid #8fcfb4; border-radius: 5px; }
.new-tab { width: 26px; }

/* Viewport */
.viewport { position: relative; display: flex; flex: 1; flex-direction: column; padding: 5px 4px 4px; background: #848484; }
.model { position: absolute; inset: 0; width: 100%; height: 100%; }
.edge path, .edge ellipse { stroke: #120d0d; stroke-width: 1px; vector-effect: non-scaling-stroke; }
.edge [stroke="none"] { stroke: none; }
.edge .glint { fill: none; stroke: #b8938c; stroke-width: 2px; }
.viewcube { position: absolute; top: 14px; right: 5px; }
.viewcube text { font: 10px Roboto, sans-serif; fill: #666; }
.viewcube .axis-z, .viewcube .axis-x { font: 700 14px "Liberation Sans", sans-serif; fill: #5252b8; }
.viewcube .axis-x { fill: #c64545; }
.watermark {
  position: absolute;
  top: 406px;
  left: 0;
  right: 0;
  display: flex;
  align-items: baseline;
  justify-content: center;
  font: 67px/96px "Liberation Mono", monospace;
  color: #d8d8d8;
  text-shadow: 1px 2px 1px #333;
  white-space: nowrap;
}
.watermark span { font: 300 80px/96px "Noto Sans CJK SC", sans-serif; }

/* Ribbon */
.ribbon { position: relative; display: flex; align-self: flex-start; height: 60px; background: #dcdcdc; }
.workspace { width: 107px; padding-left: 4px; gap: 6px; background: #a9a9a9; color: #fff; font-size: 12px; font-weight: 500; }
.workspace::before { content: ""; width: 5px; height: 24px; margin: 0 17px 0 -22px; border: solid #888; border-width: 0 1px; }
.workspace .caret { border-top-color: #fff; }
.group { display: flex; flex-direction: column; align-items: center; min-width: 74px; padding: 4px 2px 0; border-right: 1px solid #bbb; }
.group:last-child { min-width: 70px; border: 0; }
.group.narrow { min-width: 59px; }
.tools { display: flex; height: 40px; align-items: center; }
.tools button { width: 43px; height: 40px; }
.tools svg { width: 30px; height: 30px; }
.tools .on { width: 39px; background: #4a7fae; }
.menu { height: 16px; padding: 2px 8px 0; gap: 3px; font-size: 11px; line-height: 14px; }

/* Side panels */
.browser { position: relative; width: 300px; margin-top: 5px; }
.panel-head { display: flex; align-items: center; width: 300px; height: 24px; padding: 0 1px 0 5px; background: #d0d0d0; }
.panel-head h2 { flex: 1; margin-left: 11px; font-size: 11px; line-height: 24px; color: #555; }
.comments h2 { margin-left: 22px; }
.grip { width: 3px; height: 12px; margin-left: 7px; border: solid #777; border-width: 0 1px; }
.tree { display: flex; flex-direction: column; gap: 4px; padding-top: 6px; }
.tree li { display: flex; align-items: center; height: 20px; padding-left: 35px; }
.tree .root { padding-left: 17px; }
.tree .leaf { padding-left: 72px; }
.twist { margin-right: 7px; }
.chip { display: flex; align-items: center; gap: 8px; height: 20px; padding: 0 10px 0 3px; background: #c1c1c1; }
.chip svg { width: 16px; height: 16px; }
.chip b { margin-left: 6px; font-size: 11px; font-weight: 400; line-height: 20px; white-space: nowrap; }
.root-chip { padding: 0 6px 0 2px; gap: 2px; }
.root-name { display: flex; align-items: center; gap: 9px; height: 16px; padding: 0 11px 0 3px; border-left: 3px solid #e0707c; background: #6a6a6a; }
.root-name b { font-weight: 700; color: #fff; }
.root-chip input { appearance: none; width: 14px; height: 14px; margin: 0 3px; border: 2px solid #333; border-radius: 7px; background: radial-gradient(#222 0 2px, #fff 3px); }

/* Bottom of the viewport */
.bottom { position: relative; display: grid; grid-template-columns: 1fr auto 1fr; align-items: end; margin-top: auto; }
.navbars { display: flex; gap: 6px; }
.navbar { display: flex; align-items: center; gap: 8px; height: 24px; padding: 0 3px; background: #ccc; }
.navbar.tight { gap: 6px; }
.navbar button { gap: 3px; }
.navbar svg { width: 18px; height: 18px; }
.navbar .caret { border-width: 4px 3px 0; }
.navbar.tight button { gap: 1px; }

/* Timeline */
.timeline { display: flex; height: 46px; padding: 0 5px 0 8px; background: #ccc; }
.playback { display: flex; align-items: center; gap: 7px; height: 64px; margin: -8px 16px 0 0; }
.playback button { width: 18px; height: 20px; }
.playback svg { width: 14px; height: 14px; fill: #484848; }
.features { display: flex; height: 34px; margin-top: 9px; border-top: 4px solid #db7480; }
.features li { display: flex; flex-direction: column; align-items: center; width: 24px; padding-top: 4px; background: linear-gradient(#666, #666) 0 28px / 100% 2px no-repeat; }
.features li:first-child { background-position: 12px 28px; }
.features li:last-child { background-size: 12px 2px; }
.features svg { width: 16px; height: 16px; }
.features li::after { content: ""; width: 2px; height: 5px; margin-top: 4px; background: #555; }
.features .picked { background-image: linear-gradient(#666, #666), linear-gradient(#a5a5a5, #a5a5a5); background-position: 0 28px, 1px 1px; background-size: 100% 2px, 22px 23px; }
.marker { margin: 11px 0 0 -6px; }
.settings { height: 48px; }
```
